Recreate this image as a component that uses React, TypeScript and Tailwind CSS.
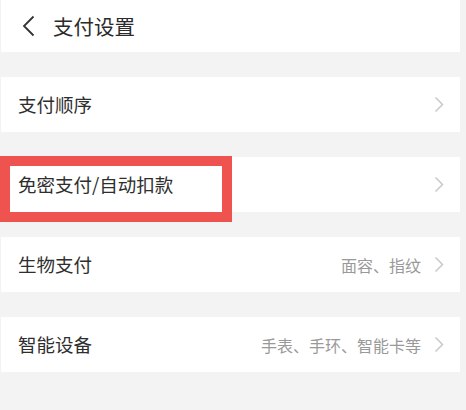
const rows = [
  { label: "支付顺序", hint: "" },
  { label: "免密支付/自动扣款", hint: "", marked: true },
  { label: "生物支付", hint: "面容、指纹" },
  { label: "智能设备", hint: "手表、手环、智能卡等" },
];

function Chevron() {
  return (
    <svg width="10" height="17" viewBox="0 0 10 17" fill="none" className="shrink-0">
      <path d="M1.5 1.5 8.5 8.5 1.5 15.5" stroke="#c9c9c9" strokeWidth="1.5" />
    </svg>
  );
}

export default function App() {
  return (
    <div
      className="flex h-[410px] w-[466px] bg-[#f3f3f3]"
      style={{ fontFamily: '"Noto Sans CJK SC", "Noto Sans", sans-serif' }}
    >
      <div className="ml-[1px] flex w-[459px] flex-col">
        <header className="flex h-[52px] items-center bg-white pl-[21px]">
          <svg width="13" height="22" viewBox="0 0 13 22" fill="none">
            <path d="M11.5 1.5 2 11l9.5 9.5" stroke="#333" strokeWidth="1.8" />
          </svg>
          <h1 className="ml-[18px] text-[20.5px] leading-none text-[#2b2b2b]">支付设置</h1>
        </header>

        <div className="mt-[25px] flex flex-col gap-[25px]">
          {rows.map((row) => (
            <div key={row.label} className="relative flex h-[55px] items-center bg-white pl-[17px] pr-[16px]">
              <span className="text-[18.5px] leading-none text-[#2e2e2e]">{row.label}</span>
              <span className="ml-auto mr-[13px] text-[16px] leading-none text-[#999]">{row.hint}</span>
              <Chevron />
              {row.marked && (
                <div className="absolute left-[-1px] top-[-1px] h-[66px] w-[232px] border-[10px] border-[#ef5350]" />
              )}
            </div>
          ))}
        </div>
      </div>
    </div>
  );
}
